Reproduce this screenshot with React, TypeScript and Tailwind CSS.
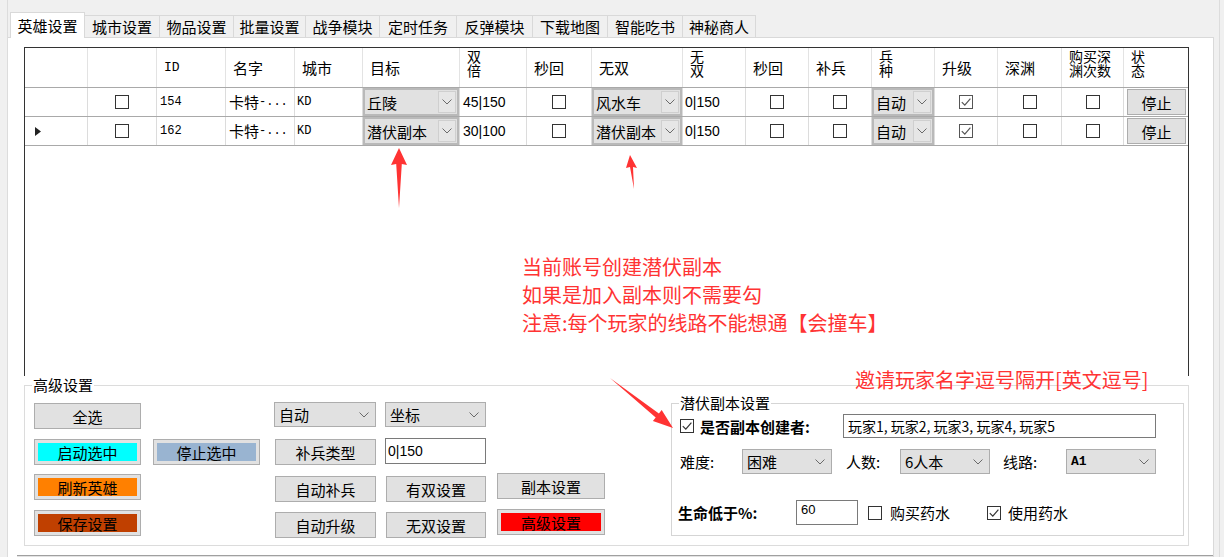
import React from "react";

const tabs = [
  { label: "英雄设置", w: "w-[75px]" },
  { label: "城市设置", w: "w-[75px]" },
  { label: "物品设置", w: "w-[74px]" },
  { label: "批量设置", w: "w-[72px]" },
  { label: "战争模块", w: "w-[74px]" },
  { label: "定时任务", w: "w-[77px]" },
  { label: "反弹模块", w: "w-[76px]" },
  { label: "下载地图", w: "w-[75px]" },
  { label: "智能吃书", w: "w-[75px]" },
  { label: "神秘商人", w: "w-[73px]" },
];

const colW = [
  "w-[63px]",
  "w-[69px]",
  "w-[69px]",
  "w-[69px]",
  "w-[68px]",
  "w-[97px]",
  "w-[67px]",
  "w-[65px]",
  "w-[91px]",
  "w-[63px]",
  "w-[63px]",
  "w-[63px]",
  "w-[63px]",
  "w-[63px]",
  "w-[64px]",
  "w-[62px]",
  "w-[64px]",
];

function Chevron() {
  return (
    <svg width="10" height="6" viewBox="0 0 10 6" className="shrink-0">
      <path d="M0.5 0.5 L5 5 L9.5 0.5" fill="none" stroke="#6a6a6a" strokeWidth="1" />
    </svg>
  );
}

function Box({ checked = false, soft = false }: { checked?: boolean; soft?: boolean }) {
  return (
    <div
      className={`w-[14px] h-[14px] shrink-0 bg-white flex items-center justify-center border ${
        soft ? "border-[#555]" : "border-[#333]"
      }`}
    >
      {checked && (
        <svg width="12" height="12" viewBox="0 0 12 12">
          <path d="M1.8 6.2 L4.8 9.2 L10.4 2.6" fill="none" stroke={soft ? "#555" : "#333"} strokeWidth="1.2" />
        </svg>
      )}
    </div>
  );
}

function TwoLine({ a, b }: { a: string; b: string }) {
  return (
    <div className="flex flex-col text-[14px] leading-[14px] pt-[1px] self-start">
      <span>{a}</span>
      <span>{b}</span>
    </div>
  );
}

function GridCombo({ text }: { text: string }) {
  return (
    <div className="h-full w-full bg-[#e1e1e1] border-2 border-[#b9b9b9] flex items-center">
      <span className="flex-1 pl-[2px] text-[15px] leading-none whitespace-nowrap">{text}</span>
      <div className="w-[18px] h-[22px] mr-[1px] border border-[#cfcfcf] bg-[#e6e6e6] flex items-center justify-center">
        <Chevron />
      </div>
    </div>
  );
}

function Btn({ label, className = "" }: { label: string; className?: string }) {
  return (
    <div
      className={`border border-[#adadad] bg-[#e1e1e1] flex items-center justify-center text-[15px] leading-none whitespace-nowrap ${className}`}
    >
      {label}
    </div>
  );
}

function ColorBtn({ label, fill, className = "" }: { label: string; fill: string; className?: string }) {
  return (
    <div className={`border border-[#adadad] bg-[#e1e1e1] p-[3px] flex ${className}`}>
      <div className={`flex-1 flex items-center justify-center text-[15px] leading-none ${fill}`}>{label}</div>
    </div>
  );
}

function Combo({ text, className = "", mono = false }: { text: string; className?: string; mono?: boolean }) {
  return (
    <div className={`border border-[#adadad] bg-[#e1e1e1] flex items-center pl-[4px] pr-[6px] ${className}`}>
      <span
        className={`flex-1 leading-none whitespace-nowrap ${
          mono ? "font-['Liberation_Mono',monospace] text-[13px] font-bold" : "text-[15px]"
        }`}
      >
        {text}
      </span>
      <Chevron />
    </div>
  );
}

const mono = "font-['Liberation_Mono',monospace] text-[12px]";
const sans = "font-['Liberation_Sans',sans-serif] text-[14px]";

function heroRow(id: string, target: string, dbl: string, wushuang: string, arrow: boolean): React.ReactNode[] {
  return [
    arrow ? (
      <div className="pl-[10px] flex items-center h-full">
        <svg width="6" height="9" viewBox="0 0 6 9">
          <path d="M0 0 L6 4.5 L0 9 Z" fill="#222" />
        </svg>
      </div>
    ) : null,
    <div className="h-full flex items-center justify-center">
      <Box />
    </div>,
    <div className={`h-full flex items-center pl-[3px] ${mono}`}>{id}</div>,
    <div className="h-full flex items-center pl-[3px] text-[15px] whitespace-nowrap">
      卡特<span className={mono}>-...</span>
    </div>,
    <div className={`h-full flex items-center pl-[2px] ${mono}`}>KD</div>,
    <GridCombo text={target} />,
    <div className={`h-full flex items-center pl-[3px] ${sans}`}>{dbl}</div>,
    <div className="h-full flex items-center justify-center">
      <Box />
    </div>,
    <GridCombo text={wushuang} />,
    <div className={`h-full flex items-center pl-[2px] ${sans}`}>0|150</div>,
    <div className="h-full flex items-center justify-center">
      <Box />
    </div>,
    <div className="h-full flex items-center justify-center">
      <Box />
    </div>,
    <GridCombo text="自动" />,
    <div className="h-full flex items-center justify-center">
      <Box checked soft />
    </div>,
    <div className="h-full flex items-center justify-center">
      <Box />
    </div>,
    <div className="h-full flex items-center justify-center">
      <Box />
    </div>,
    <div className="h-full pl-[3px] pr-[2px] py-[1px] flex">
      <Btn label="停止" className="flex-1" />
    </div>,
  ];
}

const heads: React.ReactNode[] = [
  null,
  null,
  <span className="font-['Liberation_Mono',monospace] text-[13px]">ID</span>,
  "名字",
  "城市",
  "目标",
  <TwoLine a="双" b="倍" />,
  "秒回",
  "无双",
  <TwoLine a="无" b="双" />,
  "秒回",
  "补兵",
  <TwoLine a="兵" b="种" />,
  "升级",
  "深渊",
  <TwoLine a="购买深" b="渊次数" />,
  <TwoLine a="状" b="态" />,
];

const rows = [heroRow("154", "丘陵", "45|150", "风水车", false), heroRow("162", "潜伏副本", "30|100", "潜伏副本", true)];

function HeroGrid() {
  return (
    <div className="ml-[16px] mt-[9px] w-[1165px] h-[329px] shrink-0 border-t border-l border-r border-[#333] bg-white flex flex-col">
      <div className="flex h-[40px] shrink-0 border-b border-[#a9a9a9]">
        {heads.map((h, i) => (
          <div
            key={i}
            className={`${colW[i]} shrink-0 h-full pl-[7px] flex items-center text-[15px] leading-none ${
              i < heads.length - 1 ? "border-r border-[#e3e3e3]" : ""
            }`}
          >
            {h}
          </div>
        ))}
      </div>
      {rows.map((r, ri) => (
        <div key={ri} className="flex h-[29px] shrink-0 border-b border-[#a9a9a9]">
          {r.map((c, i) => (
            <div
              key={i}
              className={`${colW[i]} shrink-0 h-full ${i < r.length - 1 ? "border-r border-[#dcdcdc]" : ""}`}
            >
              {c}
            </div>
          ))}
        </div>
      ))}
    </div>
  );
}

function DungeonGroup() {
  return (
    <fieldset className="w-[513px] h-[142px] shrink-0 border border-[#d5d5d5]">
      <legend className="ml-[7px] px-[1px] text-[15px] leading-[18px]">潜伏副本设置</legend>
      <div className="flex flex-col">
        <div className="mt-[2px] h-[24px] flex items-center pl-[8px]">
          <Box checked />
          <span className="ml-[6px] w-[143px] text-[15px] font-bold leading-none">是否副本创建者:</span>
          <div className="w-[313px] h-[24px] border border-[#7a7a7a] bg-white pl-[4px] flex items-center text-[14px] leading-none whitespace-nowrap">
            玩家1, 玩家2, 玩家3, 玩家4, 玩家5
          </div>
        </div>
        <div className="mt-[11px] h-[25px] flex items-center pl-[8px]">
          <span className="w-[62px] text-[15px] leading-none">难度:</span>
          <Combo text="困难" className="w-[90px] h-[25px]" />
          <span className="ml-[14px] w-[54px] text-[15px] leading-none">人数:</span>
          <Combo text="6人本" className="w-[90px] h-[25px]" />
          <span className="ml-[13px] w-[63px] text-[15px] leading-none">线路:</span>
          <Combo text="A1" mono className="w-[90px] h-[25px]" />
        </div>
        <div className="mt-[26px] h-[25px] flex items-center pl-[6px]">
          <span className="w-[118px] text-[15px] font-bold leading-none">生命低于%:</span>
          <div className="w-[62px] h-[25px] border border-[#7a7a7a] bg-white pl-[4px] pt-[2px] font-['Liberation_Sans',sans-serif] text-[13px] leading-none">
            60
          </div>
          <div className="ml-[10px]">
            <Box />
          </div>
          <span className="ml-[8px] text-[15px] leading-none">购买药水</span>
          <div className="ml-[37px]">
            <Box checked />
          </div>
          <span className="ml-[7px] text-[15px] leading-none">使用药水</span>
        </div>
      </div>
    </fieldset>
  );
}

function AdvancedGroup() {
  return (
    <fieldset className="ml-[16px] w-[1165px] h-[170px] shrink-0 border border-[#dcdcdc]">
      <legend className="ml-[7px] px-[1px] text-[15px] leading-[18px]">高级设置</legend>
      <div className="flex items-start">
        <div className="ml-[9px] w-[107px] flex flex-col">
          <Btn label="全选" className="mt-[9px] h-[26px]" />
          <ColorBtn label="启动选中" fill="bg-[#00ffff]" className="mt-[10px] h-[26px]" />
          <ColorBtn label="刷新英雄" fill="bg-[#ff8000]" className="mt-[9px] h-[26px]" />
          <ColorBtn label="保存设置" fill="bg-[#c04000]" className="mt-[10px] h-[26px]" />
        </div>
        <div className="ml-[12px] w-[107px] flex flex-col">
          <ColorBtn label="停止选中" fill="bg-[#99b4d1]" className="mt-[45px] h-[26px]" />
        </div>
        <div className="ml-[14px] w-[102px] flex flex-col">
          <Combo text="自动" className="mt-[8px] h-[25px]" />
          <Btn label="补兵类型" className="mt-[12px] ml-[1px] h-[26px]" />
          <Btn label="自动补兵" className="mt-[11px] ml-[1px] h-[26px]" />
          <Btn label="自动升级" className="mt-[10px] ml-[1px] h-[26px]" />
        </div>
        <div className="ml-[9px] w-[101px] flex flex-col">
          <Combo text="坐标" className="mt-[8px] h-[25px]" />
          <div className="mt-[11px] h-[26px] border border-[#7a7a7a] bg-white pl-[2px] flex items-center font-['Liberation_Sans',sans-serif] text-[14px] leading-none">
            0|150
          </div>
          <Btn label="有双设置" className="mt-[12px] ml-[1px] h-[26px]" />
          <Btn label="无双设置" className="mt-[10px] ml-[1px] h-[26px]" />
        </div>
        <div className="ml-[11px] w-[108px] flex flex-col">
          <Btn label="副本设置" className="mt-[79px] h-[26px]" />
          <ColorBtn label="高级设置" fill="bg-[#ff0000]" className="mt-[10px] h-[26px]" />
        </div>
        <div className="ml-[66px]">
          <DungeonGroup />
        </div>
      </div>
    </fieldset>
  );
}

export default function App() {
  return (
    <div className="relative w-[1224px] h-[557px] overflow-hidden bg-[#f0f0f0] text-black font-['Noto_Sans_CJK_SC','Noto_Sans',sans-serif]">
      <div className="ml-[7px] w-[1213px] h-full border-l border-r border-[#dcdcdc] flex flex-col">
        {/* tab strip */}
        <div className="h-[37px] shrink-0 flex items-end pl-[2px]">
          {tabs.map((t, i) =>
            i === 0 ? (
              <div
                key={t.label}
                className={`relative z-10 -mb-px h-[26px] ${t.w} shrink-0 bg-white border border-b-0 border-[#d9d9d9] flex items-center justify-center text-[15px] leading-none`}
              >
                {t.label}
              </div>
            ) : (
              <div
                key={t.label}
                className={`h-[22px] ${t.w} shrink-0 border-t border-r border-[#d9d9d9] bg-[#f0f0f0] flex items-center justify-center text-[15px] leading-none`}
              >
                {t.label}
              </div>
            )
          )}
        </div>
        {/* tab page */}
        <div className="w-[1206px] flex-1 bg-white border-t border-r border-[#d9d9d9] flex flex-col">
          <HeroGrid />
          <AdvancedGroup />
          <div className="ml-[9px] mt-[9px] w-[1196px] h-[3px] shrink-0 border-t border-[#a0a0a0] bg-[#e3e3e3]" />
        </div>
      </div>

      {/* red notes */}
      <div className="absolute left-[522px] top-[253px] text-[#ff3333] text-[20px] leading-[28px] whitespace-nowrap">
        <div>当前账号创建潜伏副本</div>
        <div>如果是加入副本则不需要勾</div>
        <div>注意:每个玩家的线路不能想通【会撞车】</div>
      </div>
      <div className="absolute left-[855px] top-[366px] text-[#ff3333] text-[20px] leading-[28px] whitespace-nowrap">
        邀请玩家名字逗号隔开[英文逗号]
      </div>

      {/* red arrows */}
      <svg className="absolute left-0 top-0 pointer-events-none" width="1224" height="557" viewBox="0 0 1224 557">
        <polygon points="399,148 407,165 401.8,164 399,208 396.2,164 391,165" fill="#ff3333" />
        <polygon points="630,155 637,168 633,167 634,189 630,167 626,168" fill="#ff3333" />
        <polygon points="673,428 652.9,421 655.7,417.5 610,378 658.9,413.5 661.7,410" fill="#ff3333" />
      </svg>
    </div>
  );
}
